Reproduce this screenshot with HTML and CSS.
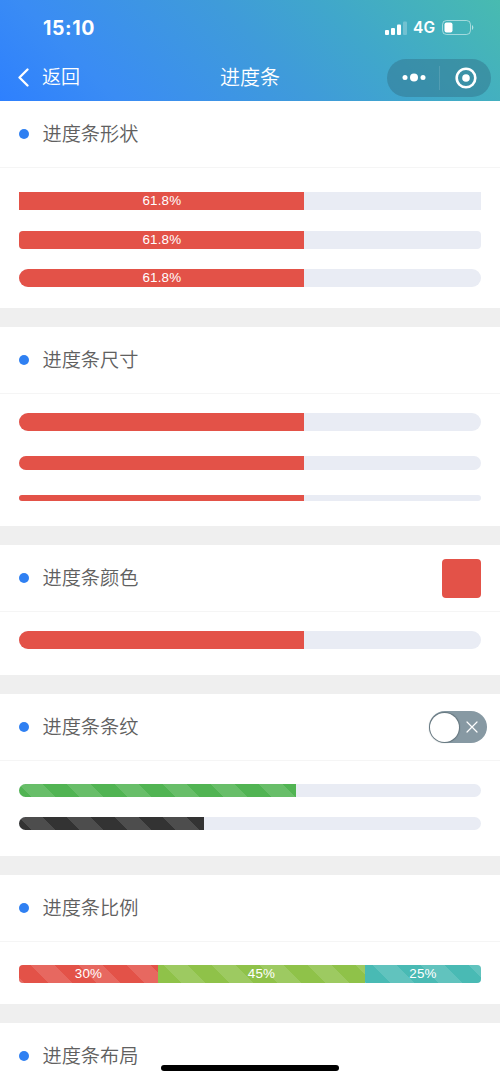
FILE: index.html
```html
<!DOCTYPE html>
<html lang="zh-CN">
<head>
<meta charset="utf-8">
<title>进度条</title>
<link rel="stylesheet" href="styles.css">
</head>
<body>
<header class="header">
  <div class="status">
    <span class="time">15:10</span>
    <div class="signals">
      <svg class="bars" width="23" height="14" viewBox="0 0 23 14" fill="#fff"><rect x="0" y="9" width="4" height="5" rx="1"/><rect x="6" y="7" width="4" height="7" rx="1"/><rect x="12" y="3.5" width="4" height="10.5" rx="1"/><rect x="18" y="0.5" width="4" height="13.5" rx="1" opacity=".25"/></svg>
      <span class="net">4G</span>
      <svg class="battery" width="32" height="15" viewBox="0 0 32 15"><rect x=".5" y=".5" width="28" height="14" rx="4" fill="none" stroke="#fff" stroke-opacity=".5"/><rect x="2.5" y="2.5" width="8" height="10" rx="2" fill="#fff"/><path d="M30 5v5q1.300-.8 1.300-2.500T30 5z" fill="#fff" opacity=".6"/></svg>
    </div>
  </div>
  <nav class="nav">
    <div class="back">
      <svg width="11" height="19" viewBox="0 0 11 19" fill="none" stroke="#fff" stroke-width="2.300" stroke-linecap="round" stroke-linejoin="round"><path d="M9.500 1.500 1.500 9.500l8 8"/></svg>
      <span>返回</span>
    </div>
    <h1 class="title">进度条</h1>
    <div class="capsule">
      <svg class="dots" width="24" height="9" viewBox="0 0 24 9" fill="#fff"><circle cx="3" cy="4.500" r="2.500"/><circle cx="12" cy="4.500" r="4"/><circle cx="21" cy="4.500" r="2.500"/></svg>
      <svg class="ring" width="22" height="22" viewBox="0 0 22 22"><circle cx="11" cy="11" r="9.300" fill="none" stroke="#fff" stroke-width="2.600"/><circle cx="11" cy="11" r="3.800" fill="#fff"/></svg>
    </div>
  </nav>
</header>
<main>
  <section class="section shape">
    <div class="head"><i class="dot"></i><h2>进度条形状</h2></div>
    <div class="body">
      <div class="progress"><div class="fill red" style="width:61.8%">61.8%</div></div>
      <div class="progress radius"><div class="fill red" style="width:61.8%">61.8%</div></div>
      <div class="progress round"><div class="fill red" style="width:61.8%">61.8%</div></div>
    </div>
  </section>
  <section class="section size">
    <div class="head"><i class="dot"></i><h2>进度条尺寸</h2></div>
    <div class="body">
      <div class="progress round"><div class="fill red" style="width:61.8%"></div></div>
      <div class="progress round sm"><div class="fill red" style="width:61.8%"></div></div>
      <div class="progress round xs"><div class="fill red" style="width:61.8%"></div></div>
    </div>
  </section>
  <section class="section color">
    <div class="head"><i class="dot"></i><h2>进度条颜色</h2><div class="swatch red"></div></div>
    <div class="body">
      <div class="progress round"><div class="fill red" style="width:61.8%"></div></div>
    </div>
  </section>
  <section class="section stripes">
    <div class="head"><i class="dot"></i><h2>进度条条纹</h2>
      <div class="switch"><div class="knob"></div><svg width="12" height="12" viewBox="0 0 12 12" stroke="#fff" stroke-width="1.200" stroke-linecap="round"><path d="M1 1l10 10M11 1 1 11"/></svg></div>
    </div>
    <div class="body">
      <div class="progress round sm"><div class="fill green striped" style="width:60%"></div></div>
      <div class="progress round sm"><div class="fill black striped" style="width:40%"></div></div>
    </div>
  </section>
  <section class="section ratio">
    <div class="head"><i class="dot"></i><h2>进度条比例</h2></div>
    <div class="body">
      <div class="progress radius">
        <div class="fill red striped phase-a" style="width:30%">30%</div>
        <div class="fill olive striped phase-b" style="width:45%">45%</div>
        <div class="fill cyan striped phase-c" style="width:25%">25%</div>
      </div>
    </div>
  </section>
  <section class="section">
    <div class="head"><i class="dot"></i><h2>进度条布局</h2></div>
  </section>
</main>
<div class="home-indicator"></div>
</body>
</html>
```
FILE: styles.css
```css
* { box-sizing: border-box; }
body {
  margin: 0;
  height: 1081px;
  overflow: hidden;
  background: #efefef;
  color: #606060;
  font-family: "Liberation Sans", "Noto Sans CJK SC", sans-serif;
}
h1, h2 { margin: 0; font-weight: 350; }
.header {
  height: 101px;
  background: linear-gradient(45deg, #2e80fe 0%, #3a8cf4 20%, #3f9bda 52%, #40a7cb 70%, #48bbb0 100%);
  color: #fff;
}
.status {
  height: 55px;
  padding: 0 26px 0 43px;
  display: flex;
  align-items: center;
  justify-content: space-between;
}
.time { font: 700 19.500px/24px Inter, sans-serif; letter-spacing: .6px; }
.signals { display: flex; align-items: center; }
.bars { margin-right: -3px; }
.net { margin: 0 7px 0 8px; font: 600 15.500px/20px Inter, sans-serif; }
.nav {
  height: 45px;
  padding: 0 9px 0 18px;
  display: grid;
  grid-template-columns: 1fr auto 1fr;
  align-items: center;
}
.back { display: flex; align-items: center; gap: 13px; font-size: 19px; line-height: 28px; font-weight: 350; }
.title { font-size: 20px; line-height: 28px; padding: 1px 9px 0 0; }
.capsule {
  justify-self: end;
  width: 104px;
  height: 38px;
  border-radius: 19px;
  background: linear-gradient(rgba(255,255,255,.12), rgba(255,255,255,.12)) center / 1px 24px no-repeat rgba(50, 115, 140, .5);
  display: grid;
  grid-template-columns: 1fr 1fr;
  align-items: center;
  justify-items: center;
}
.dots { margin-left: 2px; }
.ring { margin-left: 1px; }
.section { background: #fff; }
.section + .section { margin-top: 19px; }
.head {
  height: 67px;
  padding: 0 19.500px 0 19px;
  border-bottom: 1px solid #f5f5f5;
  display: flex;
  align-items: center;
}
.dot { width: 10px; height: 10px; border-radius: 50%; background: #2f80f2; margin-right: 13.500px; }
.head h2 { font-size: 19.200px; line-height: 28px; flex: 1; padding-top: 2px; }
.body { padding: 0 19.300px; display: flex; flex-direction: column; }
.shape .body { height: 140px; padding-top: 24px; gap: 20.300px; }
.size .body { height: 132px; padding-top: 18.700px; gap: 25.200px; }
.color .body { height: 63px; padding-top: 18.700px; }
.stripes .body { height: 95px; padding-top: 23px; gap: 19.500px; }
.ratio .body { height: 62px; padding-top: 23px; }
.progress { height: 18.300px; flex: none; background: #e9ecf4; display: flex; overflow: hidden; }
.progress.sm { height: 13.400px; }
.progress.xs { height: 6.500px; }
.radius { border-radius: 4px; }
.round { border-radius: 10px; }
.fill {
  display: flex;
  align-items: center;
  justify-content: center;
  color: #fff;
  font-size: 13.400px;
  line-height: 16px;
  letter-spacing: .2px;
}
.red { background-color: #e35248; }
.green { background-color: #51b453; }
.black { background-color: #333; }
.olive { background-color: #8fc249; }
.cyan { background-color: #49bab4; }
.striped {
  background-image: linear-gradient(45deg, rgba(255,255,255,.13) 25%, transparent 25%, transparent 50%, rgba(255,255,255,.13) 50%, rgba(255,255,255,.13) 75%, transparent 75%);
  background-size: 48px 48px;
}
.phase-a { background-position: 12px 0; }
.phase-b { background-position: 6px 0; }
.phase-c { background-position: 8px 0; }
.swatch { width: 39px; height: 39px; border-radius: 4px; }
.switch {
  width: 58px;
  height: 32px;
  margin-right: -6px;
  padding: 1.500px 9px 1.500px 1.500px;
  border-radius: 16px;
  background: #8799a3;
  display: flex;
  align-items: center;
  justify-content: space-between;
}
.knob { width: 29px; height: 29px; border-radius: 50%; background: #fff; box-shadow: 0 0 1px 1px rgba(70,85,92,.55); }
.home-indicator {
  position: absolute;
  left: 161px;
  top: 1065px;
  width: 178px;
  height: 6px;
  border-radius: 3px;
  background: #000;
}
```
